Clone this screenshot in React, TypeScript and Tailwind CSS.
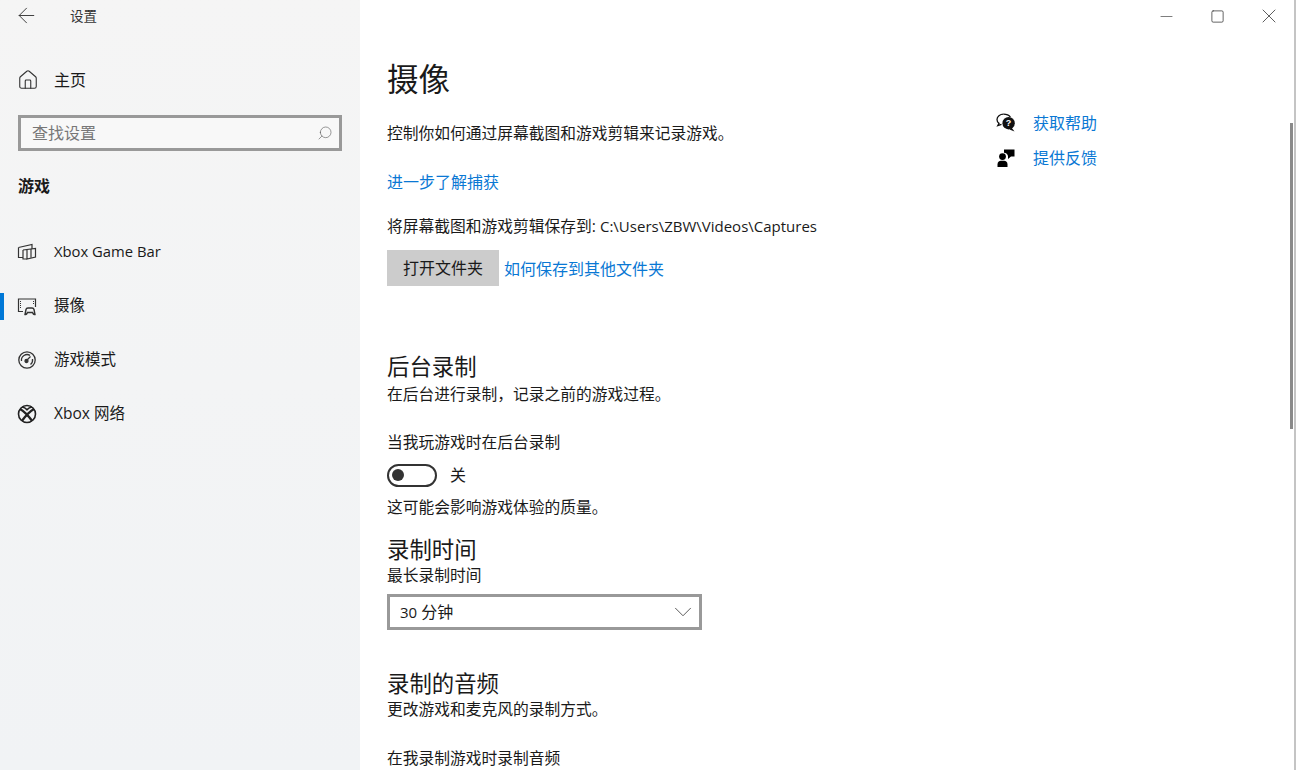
import { ArrowLeft, ChevronDown, Home, Minus, Search, Square, X } from 'lucide-react';

const FONT = 'font-["Open_Sans","Noto_Sans_CJK_SC",sans-serif]';

const GameBarIcon = () => (
    <svg width="20" height="20" viewBox="0 0 20 20" fill="none" stroke="#333" strokeWidth="1.2">
        <path d="M1.5 5.5L15 2.5V7" />
        <path d="M1.5 5.5V15.5H6" />
        <path d="M6 8V17H10" />
        <path d="M6 8L18.5 6.5V15L10 17V8" />
        <path d="M14 7V15.8" />
    </svg>
);

const CaptureIcon = () => (
    <svg width="20" height="20" viewBox="0 0 20 20" fill="none" stroke="#333" strokeWidth="1.2">
        <path d="M6 15.5H1.5V3H18.5V11" />
        <path d="M3.5 5V13M16.5 5V9" strokeWidth="1" strokeDasharray="1 1" />
        <path d="M8 18.5L9 13.5Q9.3 12 11 12H15Q16.7 12 17 13.5L18 18.5Q17 19 16 17.5L15.5 16.5H10.5L10 17.5Q9 19 8 18.5Z" strokeWidth="1.4" />
    </svg>
);

const GameModeIcon = () => (
    <svg width="20" height="20" viewBox="0 0 20 20" fill="none" stroke="#333" strokeWidth="1.3">
        <circle cx="10" cy="10" r="8.2" />
        <path d="M4.5 11A5.6 5.6 0 0 1 13 5.4M15.5 9A5.6 5.6 0 0 1 13.5 14.4" />
        <circle cx="9.5" cy="11" r="1.5" fill="#333" />
        <path d="M10 10L13.5 6.5" />
    </svg>
);

const XboxIcon = () => (
    <svg width="20" height="20" viewBox="0 0 20 20" fill="none" stroke="#222">
        <circle cx="10" cy="10" r="8.5" strokeWidth="1.6" />
        <path d="M3 5Q8.5 8 15.2 17M17 5Q11.5 8 4.8 17" strokeWidth="2.4" />
        <path d="M5 3Q8 3.2 10 5.8Q12 3.2 15 3" strokeWidth="1.6" />
    </svg>
);

const HelpIcon = () => (
    <svg width="20" height="20" viewBox="0 0 20 20">
        <path d="M7.5 1.2C4 1.2 1 3.4 1 6.6C1 8.2 1.8 9.6 3 10.4L1.8 12.6L5.5 11.4" fill="none" stroke="#111" strokeWidth="1.3" />
        <path d="M7.5 1.2C10.5 1.2 13 2.2 14.4 4.2" fill="none" stroke="#111" strokeWidth="1.3" />
        <circle cx="12.6" cy="10.2" r="6.2" fill="#111" />
        <path d="M15.5 14.5L18.5 18.5L13.5 16.4Z" fill="#111" />
        <text x="12.6" y="13.4" textAnchor="middle" fontSize="9" fontWeight="700" fill="#fff" fontFamily="Liberation Sans">?</text>
    </svg>
);

const FeedbackIcon = () => (
    <svg width="20" height="20" viewBox="0 0 20 20" fill="#000">
        <circle cx="6.5" cy="8.6" r="3.4" />
        <path d="M1.5 19V16.5C1.5 14 3 12.8 5 12.8H8C10 12.8 11.5 14 11.5 16.5V19Z" />
        <path d="M8 1.5H18.5V8.5H15L12 11V8.2C12 6.5 10 4.8 8 4.8Z" />
    </svg>
);

const NAV_ITEMS = [
    { label: 'Xbox Game Bar', icon: <GameBarIcon />, active: false },
    { label: '摄像', icon: <CaptureIcon />, active: true },
    { label: '游戏模式', icon: <GameModeIcon />, active: false },
    { label: 'Xbox 网络', icon: <XboxIcon />, active: false },
];

const Sidebar = () => (
    <aside className="w-[360px] shrink-0 h-full bg-gradient-to-b from-[#f5f5f5] via-[#f3f4f5] to-[#f1f3f5] text-[#1a1a1a]">
        <div className="flex items-center h-[34px] pl-[14px]">
            <ArrowLeft size={25} strokeWidth={0.9} className="text-[#333] -mt-[3px]" />
            <span className="ml-[31px] text-[13.5px] text-[#333] -mt-[2px]">设置</span>
        </div>
        <div className="flex items-center h-[26px] mt-[33px] pl-[17px]">
            <Home size={22} strokeWidth={1.2} className="text-[#333]" />
            <span className="ml-[15px] text-[16px]">主页</span>
        </div>
        <div className="flex items-center justify-between mx-[18px] mt-[22px] w-[324px] h-[36px] border-[3px] border-[#999] bg-[#f8f8f8] pl-[11px] pr-[6px]">
            <span className="text-[16px] text-[#777]">查找设置</span>
            <Search size={16} strokeWidth={0.9} className="text-[#555] -scale-x-100" />
        </div>
        <h2 className="ml-[18px] mt-[22px] text-[16px] leading-[26px] font-bold">游戏</h2>
        <nav className="mt-[26px]">
            {NAV_ITEMS.map((item) => (
                <div key={item.label} className="relative flex items-center h-[54px] pl-[17px]">
                    {item.active && <div className="absolute left-0 top-[14px] w-[4px] h-[27px] bg-[#0078d7]" />}
                    {item.icon}
                    <span className="ml-[17px] text-[15.5px]">{item.label.startsWith('Xbox Game') ? <span className="text-[14.8px]">{item.label}</span> : item.label}</span>
                </div>
            ))}
        </nav>
    </aside>
);

const Link = ({ children, className = '' }: { children: string, className?: string }) => (
    <a className={`text-[#0a78d4] text-[16px] ${className}`}>{children}</a>
);

const App = () => (
    <div className={`${FONT} flex w-[1298px] h-[770px] overflow-hidden bg-white text-[#1a1a1a]`}>
        <Sidebar />
        <main className="relative flex-1 flex min-w-0 overflow-hidden">
            <div className="w-[636px] shrink-0 pl-[27px] pt-[57px]">
                <h1 className="text-[31.5px] leading-[44px]">摄像</h1>
                <p className="mt-[20px] text-[15.75px] leading-[24px]">控制你如何通过屏幕截图和游戏剪辑来记录游戏。</p>
                <p className="mt-[25px] leading-[24px]"><Link>进一步了解捕获</Link></p>
                <p className="mt-[20px] text-[15.75px] leading-[24px] whitespace-nowrap">将屏幕截图和游戏剪辑保存到: <span className="text-[15px]">C:\Users\ZBW\Videos\Captures</span></p>
                <div className="flex items-center mt-[12px]">
                    <button className="w-[112px] h-[36px] bg-[#cccccc] text-[16px]">打开文件夹</button>
                    <Link className="ml-[5px] mt-[2px] text-[15.85px]">如何保存到其他文件夹</Link>
                </div>
                <h2 className="mt-[67px] text-[22.4px] leading-[28px]">后台录制</h2>
                <p className="mt-[1px] text-[15.75px] leading-[24px]">在后台进行录制，记录之前的游戏过程。</p>
                <p className="mt-[24px] text-[15.75px] leading-[24px]">当我玩游戏时在后台录制</p>
                <div className="flex items-center mt-[9px] h-[24px]">
                    <div className="flex items-center w-[50px] h-[23px] rounded-full border-[2px] border-[#333] pl-[3px]">
                        <div className="w-[12px] h-[12px] rounded-full bg-[#333]" />
                    </div>
                    <span className="ml-[13px] text-[16px]">关</span>
                </div>
                <p className="mt-[8px] text-[15.75px] leading-[24px]">这可能会影响游戏体验的质量。</p>
                <h2 className="mt-[17px] text-[22.4px] leading-[28px]">录制时间</h2>
                <p className="mt-[-1px] text-[15.75px] leading-[24px]">最长录制时间</p>
                <div className="flex items-center justify-between mt-[7px] w-[315px] h-[36px] border-[3px] border-[#999] pl-[10px] pr-[1px]">
                    <span className="text-[16px]"><span className="text-[15px]">30</span> 分钟</span>
                    <ChevronDown size={30} strokeWidth={0.7} className="text-[#444]" />
                </div>
                <h2 className="mt-[40px] text-[22.4px] leading-[28px]">录制的音频</h2>
                <p className="mt-[-1px] text-[15.75px] leading-[24px]">更改游戏和麦克风的录制方式。</p>
                <p className="mt-[25px] text-[15.75px] leading-[24px]">在我录制游戏时录制音频</p>
            </div>
            <div className="pt-[109px]">
                <div className="flex items-center h-[28px]">
                    <HelpIcon />
                    <Link className="ml-[17px]">获取帮助</Link>
                </div>
                <div className="flex items-center h-[28px] mt-[7px]">
                    <FeedbackIcon />
                    <Link className="ml-[17px]">提供反馈</Link>
                </div>
            </div>
            <div className="absolute top-0 left-[781px] flex items-center text-[#333]">
                <div className="w-[51px] h-[32px] flex items-center justify-center"><Minus size={19} strokeWidth={0.8} /></div>
                <div className="w-[51px] h-[32px] flex items-center justify-center"><Square size={15} strokeWidth={1.2} /></div>
                <div className="w-[51px] h-[32px] flex items-center justify-center"><X size={24} strokeWidth={0.8} /></div>
            </div>
            <div className="absolute left-[930px] top-[123px] w-[3px] h-[306px] bg-[#8a8a8a]" />
            <div className="absolute left-[934px] top-0 w-[2px] h-full bg-[#c4c4c4]" />
        </main>
    </div>
);

export default App;
